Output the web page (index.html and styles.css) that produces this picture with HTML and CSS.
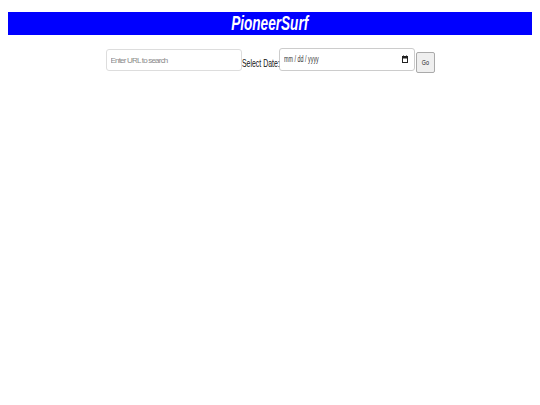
FILE: index.html
```html
<!DOCTYPE html>
<html>
<head>
<meta charset="utf-8">
<link rel="stylesheet" href="styles.css">
</head>
<body>
<header class="banner"><h1 class="title"><span class="narrow">PioneerSurf</span></h1></header>
<div class="search-row">
  <input class="url-input" type="text" placeholder="Enter URL to search">
  <label class="date-label"><span class="narrow-left">Select Date:</span></label>
  <div class="date-box"><span class="date-ph"><span class="narrower">mm / dd / yyyy</span></span>
    <svg class="cal" width="6" height="8" viewBox="0 0 6 8"><rect x="0.5" y="1.5" width="5" height="6" fill="none" stroke="#222" stroke-width="1"/><rect x="0.5" y="1.5" width="5" height="2" fill="#222"/><rect x="1" y="0.5" width="1" height="1.5" fill="#222"/><rect x="4" y="0.5" width="1" height="1.5" fill="#222"/></svg>
  </div>
  <button class="go-btn"><span class="narrow">Go</span></button>
</div>
</body>
</html>
```
FILE: styles.css
```css
body {
  margin: 8px;
  background: #ffffff;
  font-family: "Liberation Sans", Arial, sans-serif;
}
.narrow {
  display: inline-block;
  transform: scaleX(0.68);
  transform-origin: center;
}
.narrow-left {
  display: inline-block;
  transform: scaleX(0.66);
  transform-origin: left;
  white-space: nowrap;
}
.narrower {
  display: inline-block;
  transform: scaleX(0.6);
  transform-origin: left;
  white-space: nowrap;
}
.banner {
  margin-top: 4px;
  height: 23px;
  background: #0000ff;
  display: flex;
  align-items: center;
  justify-content: center;
}
.title {
  margin: 0;
  color: #ffffff;
  font-size: 20px;
  font-style: italic;
  font-weight: bold;
  line-height: 23px;
}
.search-row {
  display: flex;
  justify-content: center;
  align-items: flex-start;
  margin-top: 13px;
}
.url-input {
  box-sizing: border-box;
  width: 136px;
  height: 22px;
  margin-top: 1px;
  border: 1px solid #dddddd;
  border-radius: 3px;
  padding: 0 4px;
  font-family: "Liberation Sans", sans-serif;
  font-size: 8px;
  letter-spacing: -0.8px;
  outline: none;
}
.url-input::placeholder { color: #8a8a8a; letter-spacing: -0.8px; }
.date-label {
  width: 37px;
  font-size: 10.5px;
  color: #111111;
  margin-top: 9px;
  line-height: 12px;
}
.date-box {
  box-sizing: border-box;
  width: 136px;
  height: 23px;
  border: 1px solid #cccccc;
  border-radius: 3px;
  display: flex;
  align-items: center;
  justify-content: space-between;
  padding: 0 6px 1px 4px;
}
.date-ph {
  width: 40px;
  font-family: "Liberation Sans", sans-serif;
  font-size: 9px;
  line-height: 10px;
  color: #333333;
}
.cal { display: block; }
.go-btn {
  box-sizing: border-box;
  width: 19px;
  height: 21px;
  margin-top: 4px;
  margin-left: 1px;
  padding: 0;
  background: #efefef;
  border: 1px solid #aaaaaa;
  border-radius: 2px;
  font-family: "Liberation Sans", sans-serif;
  font-size: 8px;
  color: #222222;
}
```
